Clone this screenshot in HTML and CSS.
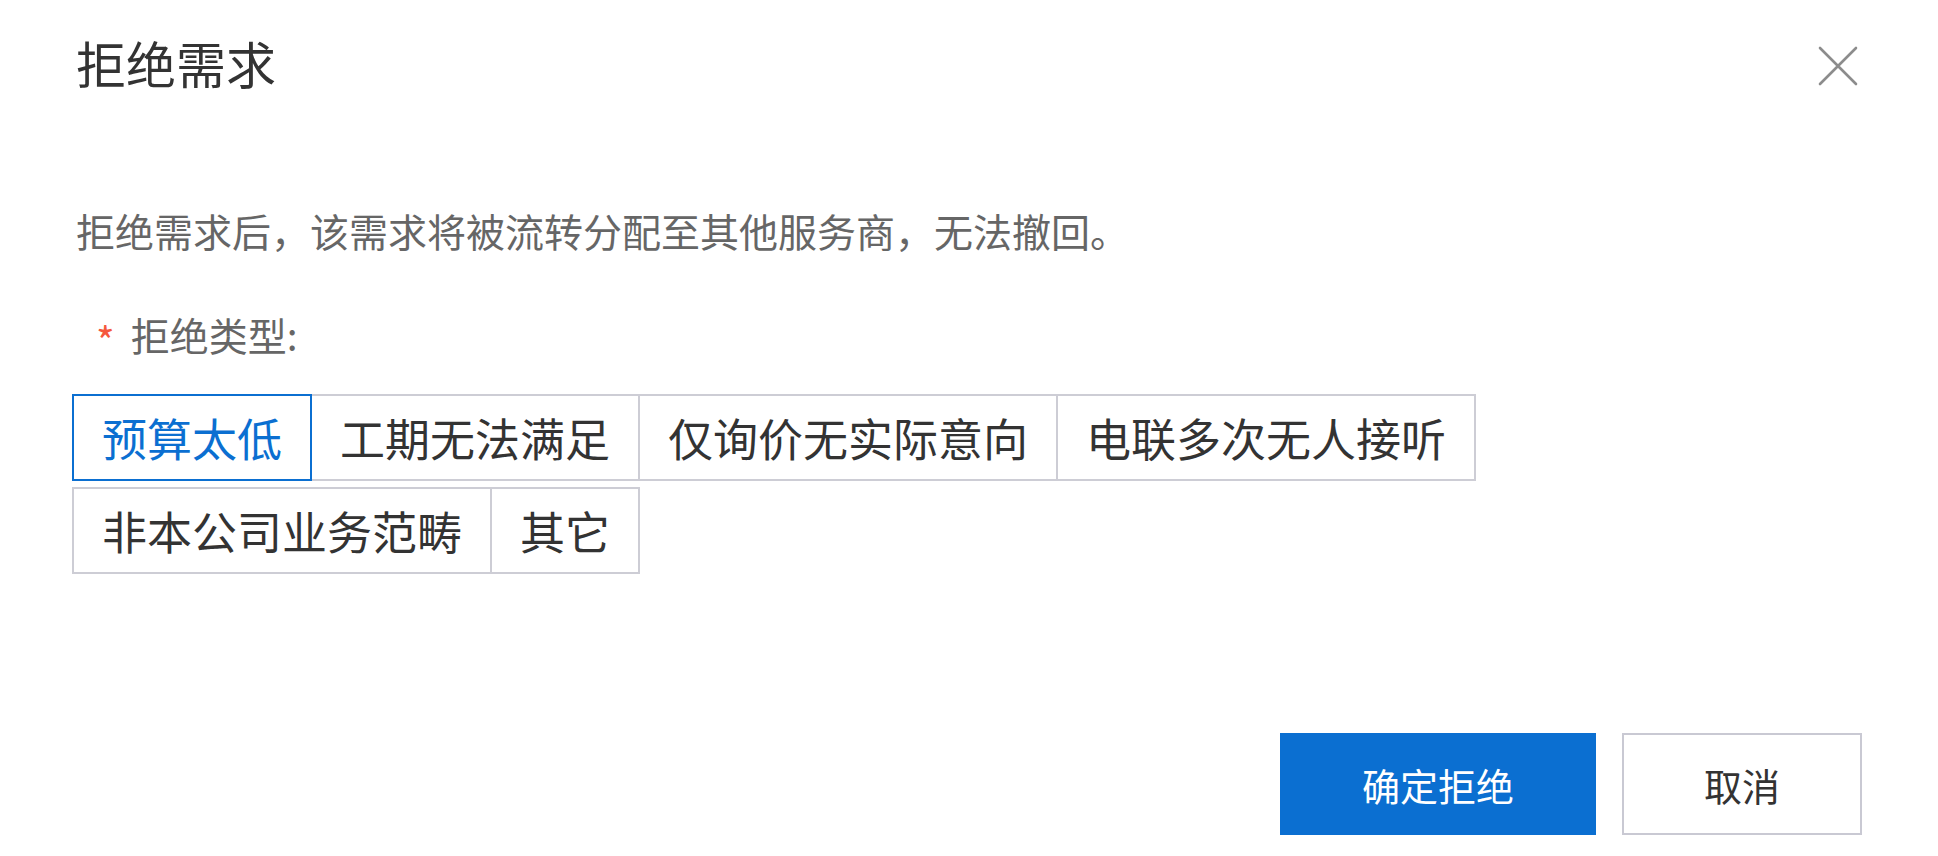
FILE: index.html
```html
<!DOCTYPE html>
<html lang="zh-CN">
<head>
<meta charset="utf-8">
<title>拒绝需求</title>
<link rel="stylesheet" href="styles.css">
</head>
<body>
<div class="dialog">
  <header class="dialog-header">
    <h1 class="dialog-title">拒绝需求</h1>
    <button class="dialog-close" aria-label="关闭">
      <svg viewBox="0 0 40 40" width="40" height="40"><path d="M2 2 L38 38 M38 2 L2 38" stroke="#8c8c8c" stroke-width="2.6" stroke-linecap="round" fill="none"/></svg>
    </button>
  </header>
  <p class="dialog-desc">拒绝需求后，该需求将被流转分配至其他服务商，无法撤回。</p>
  <div class="field-label"><span class="required">*</span>拒绝类型:</div>
  <div class="tags">
    <span class="tag tag-active">预算太低</span>
    <span class="tag">工期无法满足</span>
    <span class="tag">仅询价无实际意向</span>
    <span class="tag">电联多次无人接听</span>
    <span class="tag">非本公司业务范畴</span>
    <span class="tag">其它</span>
  </div>
  <footer class="dialog-actions">
    <button class="btn btn-primary">确定拒绝</button>
    <button class="btn btn-default">取消</button>
  </footer>
</div>
</body>
</html>
```
FILE: styles.css
```css
* { box-sizing: border-box; }
html, body {
  margin: 0;
  padding: 0;
  background: #ffffff;
}
body {
  font-family: "Noto Sans CJK SC", "Noto Sans", sans-serif;
  color: #333333;
}
.dialog {
  width: 1938px;
  height: 856px;
  padding: 0 76px 0 72px;
  display: flex;
  flex-direction: column;
}
.dialog-header {
  display: flex;
  justify-content: space-between;
  align-items: center;
  height: 128px;
  padding-left: 4px;
}
.dialog-title {
  margin: 0 0 5px;
  font-size: 50px;
  font-weight: 400;
  line-height: 50px;
  color: #333333;
}
.dialog-close {
  border: 0;
  background: none;
  padding: 0;
  margin-right: 4px;
  margin-top: 4px;
  width: 40px;
  height: 40px;
}
.dialog-close svg { display: block; }
.dialog-desc {
  margin: 77px 0 0 4px;
  font-size: 39px;
  line-height: 50px;
  color: #666666;
}
.field-label {
  margin: 54px 0 0 24px;
  font-size: 39px;
  line-height: 50px;
  color: #666666;
  display: flex;
  align-items: center;
}
.required {
  color: #f5583d;
  font-size: 40px;
  font-weight: 400;
  margin-right: 16px;
  position: relative;
  top: 6px;
}
.tags {
  margin-top: 35px;
  display: flex;
  flex-wrap: wrap;
  row-gap: 6px;
}
.tag {
  display: flex;
  align-items: center;
  height: 87px;
  padding: 0 28px;
  border: 2px solid #cdcdd5;
  font-size: 45px;
  color: #333333;
  margin-right: -2px;
  background: #fff;
}
.tag-active {
  border-color: #0b6fd1;
  color: #0b6fd1;
  position: relative;
  z-index: 1;
}
.dialog-actions {
  margin-top: auto;
  margin-bottom: 21px;
  display: flex;
  justify-content: flex-end;
  gap: 26px;
}
.btn {
  font-family: inherit;
  height: 102px;
  padding: 0 80px;
  font-size: 38px;
  border: 2px solid #c9c9d3;
  background: #fff;
  color: #333333;
}
.btn-primary {
  background: #0b6fd1;
  border-color: #0b6fd1;
  color: #ffffff;
}
```
